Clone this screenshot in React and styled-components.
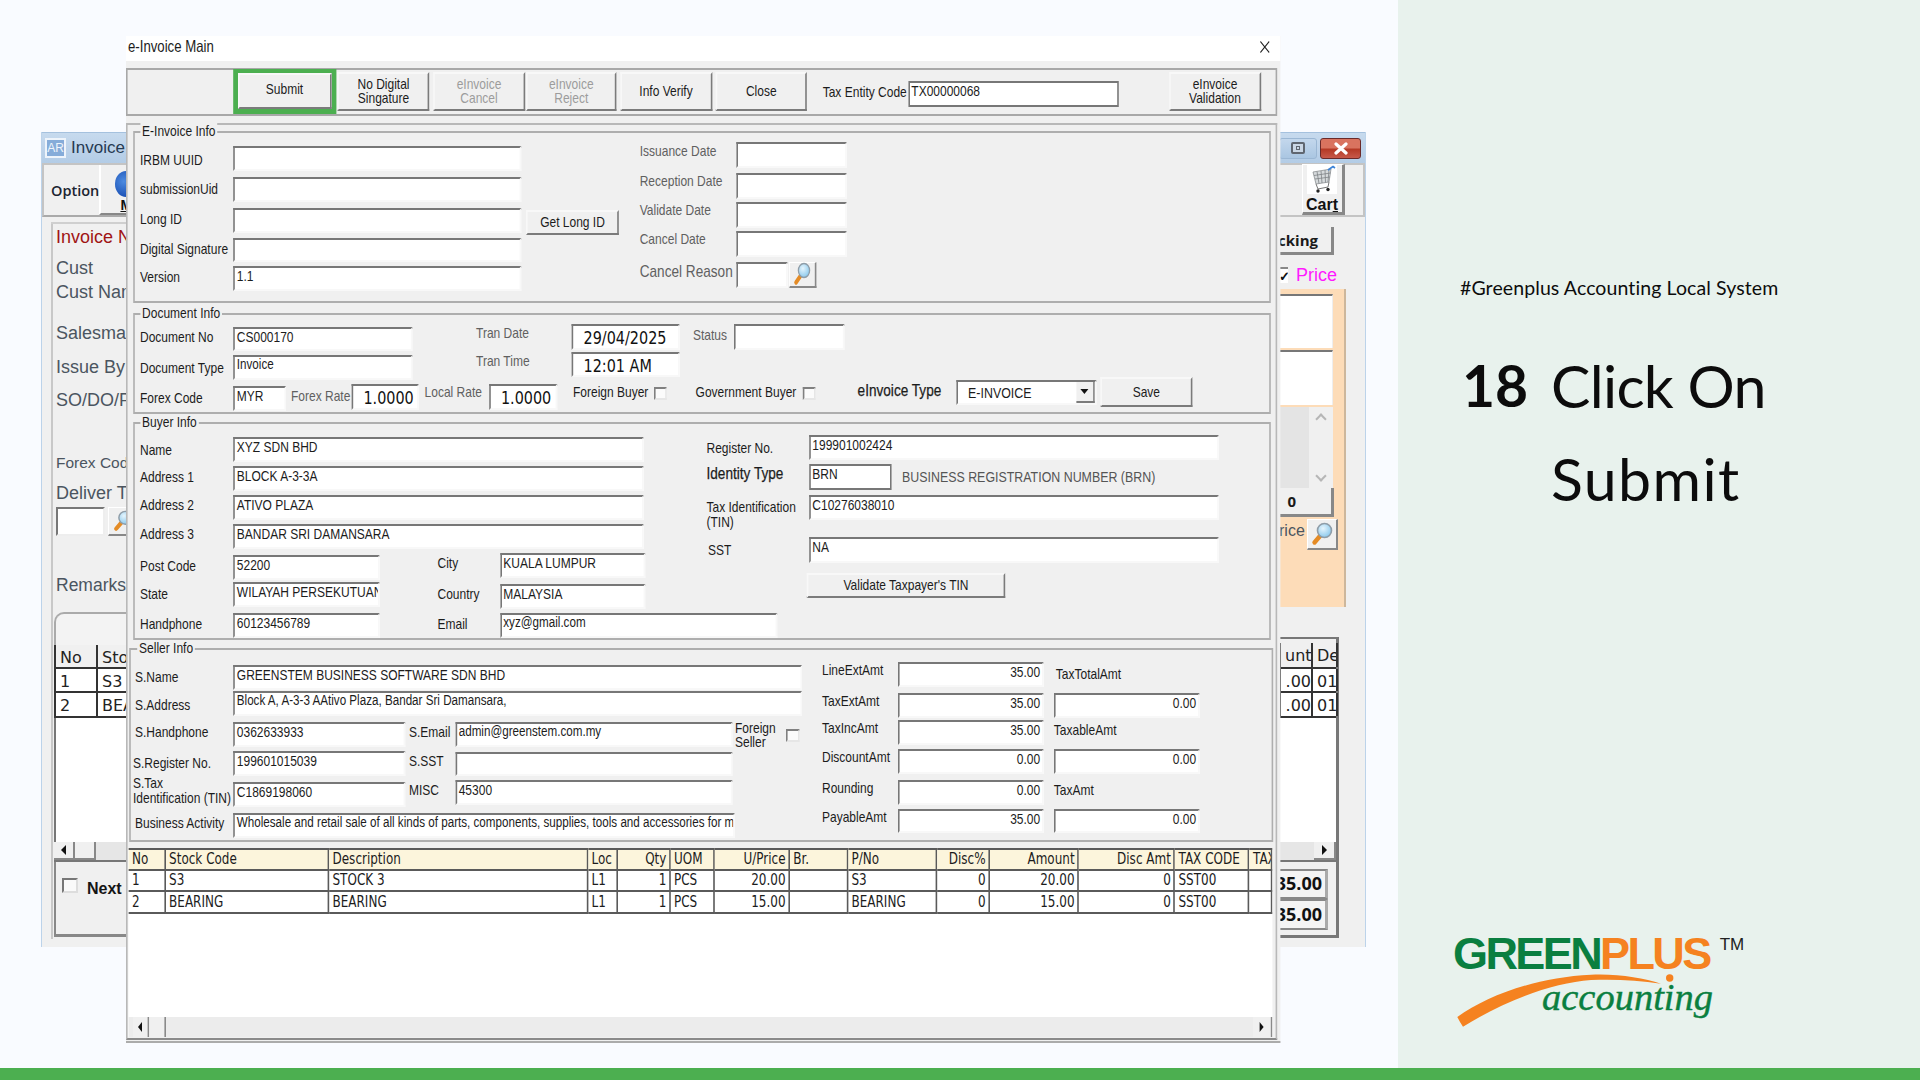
import React, { Children, cloneElement } from "react";
import styled, { createGlobalStyle } from "styled-components";

const K = 0.8;
const u = (x) => (x || 0) / K;

const Global = createGlobalStyle`
  html, body { margin: 0; padding: 0; height: 100%; overflow: hidden; background: #f9fbff; }
  * { box-sizing: border-box; }
`;

const Rows = ({ top, children }) => {
  let prev = top;
  return Children.map(children, (c) => {
    if (!c) return c;
    const mt = c.props.$y - prev;
    prev = c.props.$y + c.props.$h;
    return cloneElement(c, { $mt: mt });
  });
};

const Page = styled.div`
  width: 1920px; height: 1080px; display: flex; flex-direction: column;
  font-family: "Liberation Sans", Arial, sans-serif; overflow: hidden;
`;
const Stage = styled.div`display: flex; height: 1068px;`;
const Desktop = styled.div`position: relative; width: 1398px; height: 100%; background: #f9fbff; overflow: hidden;`;
const FooterBar = styled.div`height: 12px; background: #4caf50;`;

/* ---------- right information panel ---------- */
const Aside = styled.aside`
  flex: 1; background: #e8f2ed; padding: 274px 0 0 62px; display: flex; flex-direction: column; color: #0c0c0c;
  font-family: Lato, "Open Sans", sans-serif;
`;
const Tagline = styled.div`font-size: 19.5px; line-height: 28px; letter-spacing: 0.1px; white-space: nowrap;`;
const Heading = styled.div`display: flex; margin-top: 37px; line-height: 93px;`;
const StepNum = styled.div`width: 91px; font-size: 57px; font-weight: 700; padding-left: 2px;`;
const StepText = styled.div`font-size: 59px; letter-spacing: -0.7px; white-space: nowrap;`;
const WideWord = styled.span`letter-spacing: 1.4px;`;
const Logo = styled.div`position: relative; margin: 412px 0 0 -7px; width: 300px; height: 92px; font-family: "Liberation Sans", Arial, sans-serif;`;
const LogoLine = styled.div`display: flex; font-size: 45px; font-weight: 700; letter-spacing: -2.6px; line-height: 34px; height: 34px;`;
const LogoGreen = styled.span`color: #0a7f40;`;
const LogoOrange = styled.span`color: #f58220;`;
const LogoTm = styled.span`color: #222; font-size: 17px; font-weight: 400; letter-spacing: 0; line-height: 16px; margin-left: 10px;`;
const LogoSwoosh = styled.svg`position: absolute; left: 0; top: 0; width: 240px; height: 92px;`;
const LogoWord = styled.span`
  position: absolute; left: 89px; top: 38px; color: #0a7f40; font: italic 400 38.5px/44px "Liberation Serif", serif;
  -webkit-text-stroke: 0.4px #0a7f40;
`;

/* ---------- rear window ---------- */
const BackWindow = styled.div`
  position: absolute; left: 41px; top: 132px; width: 1325px; height: 815px; background: #f0f0f0;
  border: solid #bcd3ea; border-width: 0 1px; display: flex; justify-content: space-between;
`;
const Strip = styled.div`display: flex; flex-direction: column; width: ${(p) => p.$w}px; overflow: hidden; flex: none;`;
const SideRow = styled.div`
  display: flex; flex: none; height: ${(p) => p.$h}px; margin-top: ${(p) => p.$mt || 0}px; margin-left: ${(p) => p.$ml || 0}px;
  ${(p) => (p.$w ? `width: ${p.$w}px;` : "")}
  align-items: center; white-space: nowrap;
`;
const SideTitle = styled(SideRow)`background: linear-gradient(#c7daee, #b3cce6); border-top: 1px solid #a5c1de; color: #263a52; font-size: 17px;`;
const SideTitleEnd = styled(SideTitle)`justify-content: flex-end; padding-right: 4px; gap: 3px;`;
const ArIcon = styled.span`
  width: 21px; height: 20px; margin: 0 5px 0 3px; border: 2px solid #eef4fb; background: #86acd9; color: #eef4fb;
  font-size: 12px; line-height: 16px; text-align: center; flex: none;
`;
const SideBarL = styled(SideRow)`border: 2px solid #c4c4c4; border-right: 0; border-bottom-color: #aaa; background: #f0f0f0; position: relative; padding-left: 7px;`;
const SideBarR = styled(SideRow)`border: 2px solid #c4c4c4; border-left: 0; background: #f0f0f0; padding-left: 22.5px; padding-right: 2px;`;
const OptionText = styled.span`font-size: 14.5px; color: #1b2431; font-family: "Open Sans", sans-serif; font-weight: 600; width: 54px;`;
const ToolCell = styled.div`height: 100%; flex: 1; border-left: 2px solid #fff; border-bottom: 2px solid #888; display: flex; flex-direction: column; align-items: center; padding-left: 14px;`;
const Globe = styled.span`width: 22px; height: 26px; border-radius: 50%; margin: 6px 0 0; flex: none; background: radial-gradient(circle at 40% 40%, #4d8be0, #0b3fa8);`;
const MiniBold = styled.span`font-size: 14px; font-weight: 700; text-decoration: underline; color: #111; line-height: 16px;`;
const ReadText = styled.span`
  font-size: ${(p) => p.$s || 18}px; color: ${(p) => p.$c || "#4b5560"}; font-weight: ${(p) => p.$b || 400};
  padding-left: ${(p) => p.$pl || 0}px; padding-bottom: ${(p) => p.$pb || 0}px; line-height: 22px;
`;
const FrameTop = styled.div`height: 2px; margin: 5px 0 0 9px; background: #cfcfcf;`;
const FrameBody = styled.div`display: flex; flex-direction: column; margin-left: 9px; border-left: 2px solid #c8c8c8; height: 715px;`;
const RoundTab = styled(SideRow)`border: solid #aaa; border-width: 2px 0 0 2px; border-top-left-radius: 10px; background: #f3f3f3;`;
const WhiteBlock = styled(SideRow)`background: #fff; border-left: 2px solid #777;`;
const NextBox = styled(SideRow)`border: solid #888; border-width: 0 0 3px 2px; align-items: flex-start; padding: 16px 0 0 6px;`;
const BackCellRow = styled(SideRow)`border-bottom: 2px solid #333; border-left: 2px solid #333; background: #fff; align-items: stretch;`;
const BackCell = styled.div`
  width: ${(p) => p.$w}px; flex: none; border-right: 2px solid #333; padding-left: 4px; font-size: 16px; line-height: 25px;
  color: #222; text-align: ${(p) => p.$right ? "right" : "left"}; overflow: hidden; font-family: "DejaVu Sans", sans-serif;
  background: ${(p) => (p.$head ? "#f0f0f0" : "#fff")};
`;
const ScrollLine = styled(SideRow)`background: #e6e6e6; border-bottom: 2px solid #777;`;
const ScrollBtn = styled.div`
  width: ${(p) => p.$w}px; height: 100%; background: #f0f0f0; border: solid #888; border-width: 0 2px 2px 0; flex: none;
  display: flex; align-items: center; justify-content: center; margin-left: ${(p) => p.$ml || 0}px;
`;
const Arrow = styled.span`
  width: 0; height: 0; border: solid transparent; border-width: 5px 0 5px 0; 
  ${(p) => (p.$dir === "left" ? "border-right: 5px solid #111;" : "border-left: 5px solid #111;")}
`;
const SideInput = styled.div`
  width: ${(p) => p.$w}px; height: 100%; background: #fff; border: solid; border-color: #777 #eee #eee #777; border-width: 2px; flex: none;
`;
const SideCheck = styled.span`width: 16px; height: 15px; background: #fafafa; border: solid; border-color: #777 #ddd #ddd #777; border-width: 2px; flex: none;`;
const CheckStub = styled.span`width: 9px; height: 16px; background: #fff; flex: none; font-size: 13px; font-weight: 700; line-height: 16px; color: #111; overflow: hidden; border-top: 2px solid #888;`;
const WinBtn = styled.div`
  width: ${(p) => p.$w}px; height: 21px; border-radius: 3px; flex: none;
  display: flex; align-items: center; justify-content: center;
  background: ${(p) => (p.$red ? "linear-gradient(#d9735f 0 45%, #b53a26 55%, #c7594a)" : "linear-gradient(#c3d7ec, #aac6e2)")};
  border: 1px solid ${(p) => (p.$red ? "#6a2a2a" : "#9bb7d4")};
`;
const RestoreGlyph = styled.span`width: 14px; height: 12px; border: 2px solid #5f6670; border-radius: 2px; background: #c9d6e4; display: flex; align-items: center; justify-content: center;`;
const RestoreCore = styled.span`width: 4px; height: 4px; border: 1px solid #5f6670;`;
const CartBtn = styled.div`
  width: 43px; height: 51px; flex: none; margin-top: -1px; background: #f0f0f0; border: solid; border-color: #fff #888 #888 #fff; border-width: 1px 3px 3px 1px;
  display: flex; flex-direction: column; align-items: center; font-size: 16px; font-weight: 700; color: #111; line-height: 15px;
`;
const CartMark = styled.svg`width: 30px; height: 29px; background: #fff; flex: none; margin-bottom: 3px;`;
const Underlined = styled.span`text-decoration: underline;`;
const RaisedBox = styled(SideRow)`
  background: #f0f0f0; border: solid #888; border-width: 0 3px 3px 0; justify-content: flex-end; padding-right: ${(p) => p.$pr || 13}px;
  font-size: 15px; font-weight: 700; color: #1a1a1a; font-family: "Open Sans", sans-serif;
`;
const PeachPanel = styled(SideRow)`background: #fddcb8; flex-direction: column; align-items: flex-start; border-right: 2px solid #cdb79c;`;
const WhiteBox = styled(SideRow)`background: #fff; border-top: 2px solid #777; border-right: 1px solid #eee;`;
const GreyList = styled(SideRow)`background: #e4e4e4;`;
const GreyRail = styled.div`margin-left: 30px; width: 24px; height: 100%; background: #f0f0f0; display: flex; flex-direction: column; justify-content: space-between; align-items: center; padding: 8px 0; color: #b0b0b0;`;
const UpDown = styled.span`width: 8px; height: 8px; border: solid #b6b6b6; border-width: 2px 0 0 2px; transform: rotate(${(p) => p.$r}deg);`;
const SearchBtn = styled.div`
  width: ${(p) => p.$w}px; height: 100%; background: #f0f0f0; border: solid; border-color: #fff #888 #888 #fff; border-width: 1px 2px 2px 1px; flex: none;
  display: flex; align-items: center; justify-content: center; margin-left: ${(p) => p.$ml || 0}px;
`;
const SearchMark = styled.svg`width: ${(p) => p.$s}px; height: ${(p) => p.$s}px; flex: none;`;
const TotalBox = styled(SideRow)`
  border: solid; border-color: #888 #aaa #888 #fff; border-width: 2px 3px 2px 0; background: #f4f4f4; justify-content: flex-end; padding: 0 3px 2px 0;
  font: 700 18px/22px "Open Sans", sans-serif; color: #111;
`;
const RightEdge = styled.div`display: flex; flex-direction: column; width: 60px; border: solid #777; border-width: 2px 3px 3px 0; height: ${(p) => p.$h}px; margin-top: ${(p) => p.$mt || 0}px; flex: none;`;
const WhiteFill = styled(SideRow)`background: #fff;`;

/* ---------- e-invoice window ---------- */
const Win = styled.div`
  position: absolute; left: 126px; top: 36px; width: ${u(1154)}px; height: 1007px; background: #f0f0f0; transform: scaleX(${K}); transform-origin: 0 0;
  display: flex; flex-direction: column; font-size: 15px; color: #1c1c1c; border-bottom: 2px solid #ababab;
`;
const WinTitle = styled.div`height: 25px; background: #fff; display: flex; align-items: center; justify-content: space-between; padding: 0 ${u(9)}px 4px ${u(2)}px; font-size: 16.5px; flex: none;`;
const CloseMark = styled.svg`width: ${u(12)}px; height: 12px;`;
const Toolbar = styled.div`
  width: ${u(1151.5)}px; height: 48px; margin-top: 7px; border: 2px solid #a8a8a8; display: flex; align-items: flex-start; flex: none;
`;
const Ring = styled.div`
  width: ${u(103)}px; height: 45px; margin: -1px 0 0 ${u(105.4)}px; border: solid #4caf50; border-width: 4px ${u(5)}px 5px; flex: none; display: flex;
`;
const Btn = styled.div`
  width: ${(p) => (p.$fill ? "100%" : `${u(p.$w)}px`)}; height: ${(p) => (p.$fill ? "100%" : `${p.$h}px`)}; flex: none;
  margin: ${(p) => p.$mt || 0}px 0 0 ${(p) => u(p.$ml)}px;
  background: #f0f0f0; border: solid; border-color: #f8f8f8 #7b7b7b #7b7b7b #f8f8f8; border-width: 2px;
  display: flex; align-items: center; justify-content: center; text-align: center; line-height: 14.7px; white-space: nowrap;
  color: ${(p) => (p.$off ? "#9c9c9c" : "#1c1c1c")}; padding-bottom: ${(p) => p.$pb || 0}px;
`;
const Panel = styled.div`
  width: ${u(1151.5)}px; height: 917px; margin-top: 7px; border: 2px solid #b8b8b8; border-bottom-color: #8a8a8a; display: flex; flex-direction: column; align-items: flex-start; flex: none;
`;
const Group = styled.div`
  position: relative; width: ${(p) => u(p.$w)}px; height: ${(p) => p.$h}px; margin: ${(p) => p.$mt}px 0 0 ${(p) => u(p.$ml)}px;
  border: 2px solid #aeaeae; display: ${(p) => (p.$stack ? "block" : "flex")}; flex: none;
`;
const Legend = styled.span`
  position: absolute; left: ${(p) => u(p.$x)}px; top: -10px; padding: 0 ${u(2)}px; background: #f0f0f0; line-height: 16px; white-space: nowrap;
`;
const Col = styled.div`display: flex; flex-direction: column; flex: none; width: ${(p) => u(p.$w)}px; margin-left: ${(p) => u(p.$ml)}px;`;
const Band = styled.div`display: flex; flex: none; align-items: flex-start; height: ${(p) => p.$h}px; margin-top: ${(p) => p.$mt || 0}px;`;
const Row = styled.div`
  display: flex; align-items: center; flex: none; height: ${(p) => p.$h}px;
  margin-top: ${(p) => p.$mt || 0}px; margin-left: ${(p) => u(p.$ml)}px;
`;
const L = styled.span`
  flex: none; display: block; width: ${(p) => u(p.$w)}px; margin-left: ${(p) => u(p.$ml)}px;
  padding-left: ${(p) => u(p.$pl)}px; padding-bottom: 2px;
  margin-top: ${(p) => (p.$dy > 0 ? p.$dy * 2 : 0)}px; margin-bottom: ${(p) => (p.$dy < 0 ? -p.$dy * 2 : 0)}px;
  font-size: ${(p) => (p.$strong ? 17 : 15)}px; line-height: 14.6px; white-space: nowrap;
  color: ${(p) => (p.$gray ? "#606060" : "#1c1c1c")};
  ${(p) => (p.$strong && !p.$gray ? "-webkit-text-stroke: 0.25px #1c1c1c;" : "")}
`;
const F = styled.div`
  flex: none; width: ${(p) => u(p.$w)}px; height: 100%; background: #fff; margin-left: ${(p) => u(p.$ml)}px; overflow: hidden;
  border: 2px solid; border-color: ${(p) => (p.$boxed ? "#777" : "#777 #f8f8f8 #f8f8f8 #777")};
  padding: 0 ${u(2)}px 0 ${u(1.7)}px; line-height: 15px; font-size: ${(p) => (p.$tight ? 14.55 : 15)}px; white-space: nowrap; color: #1c1c1c;
  text-align: ${(p) => (p.$right ? "right" : "left")};
`;
const Big = styled(F)`
  font: 400 18px/23px "DejaVu Sans", sans-serif; padding-left: ${u(10.5)}px;
  color: #111;
`;
const Note = styled.span`flex: none; margin-left: ${u(10.4)}px; font-size: 15.5px; color: #555;`;
const Check = styled.span`
  flex: none; width: ${(p) => u(p.$w || 13)}px; height: 13px; background: #fbfbfb; border: 2px solid; border-color: #808080 #e6e6e6 #e6e6e6 #808080;
  margin-top: ${(p) => (p.$dy > 0 ? p.$dy * 2 : 0)}px; margin-bottom: ${(p) => (p.$dy < 0 ? -p.$dy * 2 : 0)}px;
`;
const Select = styled(F)`display: flex; padding: 0 0 0 ${u(10.5)}px; font-size: 15.5px; line-height: 21px; justify-content: space-between;`;
const SelectBtn = styled.span`
  width: ${u(18)}px; height: 100%; flex: none; background: #f0f0f0; border: solid #7b7b7b; border-width: 0 2px 2px 0; display: flex; align-items: center; justify-content: center;
`;
const DownTri = styled.span`width: 0; height: 0; border: solid transparent; border-width: 5px 5px 0; border-top-color: #111;`;
const GridWrap = styled.div`
  width: ${u(1143.4)}px; height: 189px; margin: 6px 0 0 ${u(1)}px; background: #fff; display: flex; flex-direction: column; flex: none; overflow: hidden;
`;
const GridTable = styled.table`
  border-collapse: separate; border-spacing: 0; table-layout: fixed; width: 100%; font: 400 15px/19px "DejaVu Sans", sans-serif; color: #1c1c1c; flex: none;
`;
const Hd = styled.th`
  height: 21.4px; background: #fcf5dc; font-weight: 400; padding: 0 ${u(2.5)}px 0 ${u(3.5)}px; border: solid #5a5a5a; border-width: 2px 2px 2px 0; white-space: nowrap; overflow: hidden;
  text-align: ${(p) => (p.$right ? "right" : "left")};
`;
const Td = styled.td`
  height: 21.2px; padding: 0 ${u(2.5)}px 0 ${u(3.5)}px; border: solid #5a5a5a; border-width: 0 2px 2px 0; white-space: nowrap; overflow: hidden;
  text-align: ${(p) => (p.$right ? "right" : "left")};
`;
const GridSpacer = styled.div`flex: 1;`;
const HScroll = styled.div`height: 20px; flex: none; background: #ececec; display: flex; padding-left: ${u(4.5)}px;`;
const HBtn = styled.div`
  flex: none; width: ${(p) => u(p.$w)}px; height: 100%; margin-left: ${(p) => (p.$end ? "auto" : "0")}; background: #f0f0f0; border: solid #8a8a8a; border-width: 0 2px 0 0;
  display: flex; align-items: center; justify-content: center;
`;

const Search = ({ size }) => (
  <SearchMark $s={size} viewBox="0 0 24 24">
    <defs>
      <radialGradient id="lens" cx="0.4" cy="0.35" r="0.75">
        <stop offset="0" stopColor="#e6f5fd" />
        <stop offset="1" stopColor="#7fc3ea" />
      </radialGradient>
    </defs>
    <path d="M10 14 L4.5 20.5" stroke="#e48b25" strokeWidth="4.4" strokeLinecap="round" />
    <circle cx="14.5" cy="8.5" r="7" fill="url(#lens)" stroke="#8f9da8" strokeWidth="1.6" />
  </SearchMark>
);

const Cart = () => (
  <CartMark viewBox="0 0 30 29">
    <path d="M6 7 L24 4 L22 17 L9 19 Z" fill="#d6dadc" stroke="#8b8f92" strokeWidth="0.8" />
    <path d="M10 6.5 L12 18.5 M14 6 L15 18 M18 5 L18.5 17.5 M22 4.5 L21 17 M7 10.5 L23.5 8 M8 14 L23 12" stroke="#7f8386" strokeWidth="0.8" fill="none" />
    <path d="M21 5 L26 1.5 L28 3" stroke="#3b82d6" strokeWidth="1.6" fill="none" />
    <path d="M9 19 L11 24 L21 22 L22 17" stroke="#777" strokeWidth="1" fill="none" />
    <circle cx="11" cy="26" r="1.7" fill="#222" /><circle cx="21" cy="24.5" r="1.7" fill="#222" />
  </CartMark>
);

const COLS = [37, 163.4, 259, 30.3, 52.2, 44.1, 75.1, 58.3, 89, 52.7, 89, 96.3, 74.5, 22.5];
const HEAD = [["No"], ["Stock Code"], ["Description"], ["Loc"], ["Qty", 1], ["UOM"], ["U/Price", 1], ["Br."], ["P/No"], ["Disc%", 1], ["Amount", 1], ["Disc Amt", 1], ["TAX CODE"], ["TAX Amt"]];
const DATA = [
  ["1", "S3", "STOCK 3", "L1", "1", "PCS", "20.00", "", "S3", "0", "20.00", "0", "SST00", ""],
  ["2", "BEARING", "BEARING", "L1", "1", "PCS", "15.00", "", "BEARING", "0", "15.00", "0", "SST00", ""],
];

const LeftSide = () => (
  <Strip $w={84}>
    <Rows top={132}>
      <SideTitle $y={132} $h={31}><ArIcon>AR</ArIcon>Invoice /</SideTitle>
      <SideBarL $y={163} $h={54}><OptionText>Option</OptionText><ToolCell><Globe /><MiniBold>M</MiniBold></ToolCell></SideBarL>
    </Rows>
    <FrameTop />
    <FrameBody>
      <Rows top={224}>
        <SideRow $y={226} $h={22}><ReadText $c="#a01414" $pl={3}>Invoice N</ReadText></SideRow>
        <SideRow $y={257} $h={22}><ReadText $pl={3}>Cust</ReadText></SideRow>
        <SideRow $y={281} $h={22}><ReadText $pl={3}>Cust Name</ReadText></SideRow>
        <SideRow $y={322} $h={22}><ReadText $pl={3}>Salesman</ReadText></SideRow>
        <SideRow $y={356} $h={22}><ReadText $pl={3}>Issue By</ReadText></SideRow>
        <SideRow $y={389} $h={22}><ReadText $pl={3}>SO/DO/PO</ReadText></SideRow>
        <SideRow $y={452} $h={22}><ReadText $s={15.5} $pl={3}>Forex Code</ReadText></SideRow>
        <SideRow $y={482} $h={22}><ReadText $pl={3}>Deliver To</ReadText></SideRow>
        <SideRow $y={507} $h={29} $ml={3}><SideInput $w={49} /><SearchBtn $w={30} $ml={3}><Search size={22} /></SearchBtn></SideRow>
        <SideRow $y={574} $h={22}><ReadText $s={17.5} $pl={3}>Remarks</ReadText></SideRow>
        <RoundTab $y={612} $h={33} $ml={1} />
        <BackCellRow $y={645} $h={24} $ml={1}><BackCell $w={42} $head>No</BackCell><BackCell $w={30} $head>Stock</BackCell></BackCellRow>
        <BackCellRow $y={669} $h={24} $ml={1}><BackCell $w={42}>1</BackCell><BackCell $w={30}>S3</BackCell></BackCellRow>
        <BackCellRow $y={693} $h={25} $ml={1}><BackCell $w={42}>2</BackCell><BackCell $w={30}>BEARING</BackCell></BackCellRow>
        <WhiteBlock $y={718} $h={124} $ml={1} />
        <ScrollLine $y={842} $h={20} $ml={1}><ScrollBtn $w={21}><Arrow $dir="left" /></ScrollBtn><ScrollBtn $w={21} /></ScrollLine>
        <NextBox $y={862} $h={75} $ml={1}><SideCheck /><ReadText $s={16} $c="#151515" $b={700} $pl={9}>Next</ReadText></NextBox>
      </Rows>
    </FrameBody>
  </Strip>
);

const RightSide = () => (
  <Strip $w={86}>
    <Rows top={132}>
      <SideTitleEnd $y={132} $h={31}>
        <WinBtn $w={38}><RestoreGlyph><RestoreCore /></RestoreGlyph></WinBtn>
        <WinBtn $w={41} $red>
          <svg width="16" height="13" viewBox="0 0 16 13"><path d="M3 2 L13 11 M13 2 L3 11" stroke="#fff" strokeWidth="3.2" strokeLinecap="round" /></svg>
        </WinBtn>
      </SideTitleEnd>
      <SideBarR $y={163} $h={54}>
        <CartBtn><Cart /><span>Car<Underlined>t</Underlined></span></CartBtn>
      </SideBarR>
      <RaisedBox $y={227} $h={28} $w={55}>cking</RaisedBox>
      <SideRow $y={264} $h={22} $w={67}>
        <CheckStub>✓</CheckStub>
        <ReadText $s={18} $c="#ff19ff" $pl={8}>Price</ReadText>
      </SideRow>
      <PeachPanel $y={289} $h={318} $w={67}>
        <Rows top={289}>
          <WhiteBox $y={294} $h={54} $w={54} />
          <WhiteBox $y={350} $h={55} $w={54} />
          <GreyList $y={407} $h={81} $w={54}><GreyRail><UpDown $r={45} /><UpDown $r={225} /></GreyRail></GreyList>
          <RaisedBox $y={488} $h={29} $w={55} $pr={35}><span>0</span></RaisedBox>
          <SideRow $y={519} $h={31} $w={58}>
            <ReadText $s={16} $c="#4b5560" $pb={7}>rice</ReadText>
            <SearchBtn $w={31} $ml={2}><Search size={24} /></SearchBtn>
          </SideRow>
        </Rows>
      </PeachPanel>
      <RightEdge $y={637} $h={301}>
        <Rows top={639}>
          <BackCellRow $y={643} $h={26}><BackCell $w={32} $head $right>unt</BackCell><BackCell $w={25} $head>De</BackCell></BackCellRow>
          <BackCellRow $y={669} $h={24}><BackCell $w={32} $right>.00</BackCell><BackCell $w={25}>01</BackCell></BackCellRow>
          <BackCellRow $y={693} $h={25}><BackCell $w={32} $right>.00</BackCell><BackCell $w={25}>01</BackCell></BackCellRow>
          <WhiteFill $y={718} $h={124} $w={57} />
          <ScrollLine $y={842} $h={20} $w={57}><ScrollBtn $w={22} $ml={35}><Arrow $dir="right" /></ScrollBtn></ScrollLine>
          <TotalBox $y={869} $h={30} $w={49}>35.00</TotalBox>
          <TotalBox $y={899} $h={31} $w={49}>35.00</TotalBox>
        </Rows>
      </RightEdge>
    </Rows>
  </Strip>
);

export default function App() {
  return (
    <Page>
      <Global />
      <Stage>
        <Desktop>
          <BackWindow>
            <LeftSide />
            <RightSide />
          </BackWindow>
          <Win>
            <WinTitle>
              e-Invoice Main
              <CloseMark viewBox="0 0 12 12"><path d="M0.5 0.5 L11.5 11.5 M11.5 0.5 L0.5 11.5" stroke="#222" strokeWidth="1.1" /></CloseMark>
            </WinTitle>
            <Toolbar>
              <Ring><Btn $fill $pb={3}>Submit</Btn></Ring>
              <Btn $w={92} $h={38.7} $mt={2} $ml={1.5}>No Digital<br />Singature</Btn>
              <Btn $w={92} $h={38.7} $mt={2} $ml={3.5} $off>eInvoice<br />Cancel</Btn>
              <Btn $w={90.5} $h={38.7} $mt={2} $ml={1} $off>eInvoice<br />Reject</Btn>
              <Btn $w={92} $h={38.7} $mt={2} $ml={3.5}>Info Verify</Btn>
              <Btn $w={91.5} $h={38.7} $mt={2} $ml={3.5}>Close</Btn>
              <Row $h={26} $mt={11} $ml={15.7}>
                <L $w={85.3} $dy={-0.5}>Tax Entity Code</L>
                <F $w={211} $boxed>TX00000068</F>
              </Row>
              <Btn $w={92} $h={38.7} $mt={2} $ml={50}>eInvoice<br />Validation</Btn>
            </Toolbar>
            <Panel>
              <Group $w={1137.5} $h={172} $mt={6} $ml={5.4}>
                <Legend $x={5.5}>E-Invoice Info</Legend>
                <Col $w={499.7} $ml={5.4}>
                  <Rows top={132.3}>
                    <Row $y={145.7} $h={25}><L $w={93.5} $dy={2}>IRBM UUID</L><F $w={288} /></Row>
                    <Row $y={176.7} $h={25}><L $w={93.5}>submissionUid</L><F $w={288} /></Row>
                    <Row $y={207.7} $h={25}>
                      <L $w={93.5} $dy={-0.5}>Long ID</L><F $w={288} />
                      <Btn $w={92.4} $h={25.7} $mt={3} $ml={4.8}>Get Long ID</Btn>
                    </Row>
                    <Row $y={237} $h={24.7}><L $w={93.5}>Digital Signature</L><F $w={288} /></Row>
                    <Row $y={265.7} $h={24.6}><L $w={93.5}>Version</L><F $w={288}>1.1</F></Row>
                  </Rows>
                </Col>
                <Col $w={300}>
                  <Rows top={132.3}>
                    <Row $y={141.3} $h={26}><L $w={96.3} $dy={-3} $gray>Issuance Date</L><F $w={110.6} /></Row>
                    <Row $y={172.3} $h={26}><L $w={96.3} $dy={-3.3} $gray>Reception Date</L><F $w={110.6} /></Row>
                    <Row $y={201} $h={26}><L $w={96.3} $dy={-3.3} $gray>Validate Date</L><F $w={110.6} /></Row>
                    <Row $y={230} $h={26.7}><L $w={96.3} $dy={-3.3} $gray>Cancel Date</L><F $w={110.6} /></Row>
                    <Row $y={261.3} $h={26}>
                      <L $w={96.3} $dy={-1.6} $gray $strong>Cancel Reason</L><F $w={51.3} />
                      <SearchBtn $w={u(27)} $ml={u(1.7)}><Search size={24} /></SearchBtn>
                    </Row>
                  </Rows>
                </Col>
              </Group>

              <Group $w={1137.5} $h={101.7} $mt={9.6} $ml={5.4} $stack>
                <Legend $x={5.5}>Document Info</Legend>
                <Band $h={62.8}>
                  <Col $w={336} $ml={5.4}>
                    <Rows top={313.9}>
                      <Row $y={326} $h={24}><L $w={93.5}>Document No</L><F $w={179}>CS000170</F></Row>
                      <Row $y={354.7} $h={24.6}><L $w={93.5} $dy={1.2}>Document Type</L><F $w={179} $tight>Invoice</F></Row>
                    </Rows>
                  </Col>
                  <Col $w={203.5}>
                    <Rows top={313.9}>
                      <Row $y={323.3} $h={26}><L $w={95.4} $dy={-3} $gray>Tran Date</L><Big $w={108}>29/04/2025</Big></Row>
                      <Row $y={351} $h={25.7}><L $w={95.4} $dy={-1.8} $gray>Tran Time</L><Big $w={108}>12:01 AM</Big></Row>
                    </Rows>
                  </Col>
                  <Col $w={200} $ml={13.5}>
                    <Rows top={313.9}>
                      <Row $y={323.3} $h={26}><L $w={40.7} $dy={-1} $gray>Status</L><F $w={111} /></Row>
                    </Rows>
                  </Col>
                </Band>
                <Band $h={34}>
                  <Row $h={25} $mt={9} $ml={5.4}><L $w={93.5}>Forex Code</L><F $w={52.2}>MYR</F></Row>
                  <Row $h={25.6} $mt={7} $ml={5.3}>
                    <L $w={60.3} $gray>Forex Rate</L><Big $w={67.7}>1.0000</Big>
                    <L $w={64.2} $ml={5.6} $dy={-3.7} $gray>Local Rate</L><Big $w={68.2}>1.0000</Big>
                    <L $w={80.6} $ml={16} $dy={-3.5}>Foreign Buyer</L><Check $dy={-3.5} />
                    <L $w={107.5} $ml={29} $dy={-3.5}>Government Buyer</L><Check $w={12.5} $dy={-3.5} />
                  </Row>
                  <Row $h={25.3} $mt={2.3} $ml={42}>
                    <L $w={98.4} $strong>eInvoice Type</L>
                    <Select $w={140}>E-INVOICE<SelectBtn><DownTri /></SelectBtn></Select>
                  </Row>
                  <Btn $w={91.3} $h={29.3} $ml={4.7}>Save</Btn>
                </Band>
              </Group>

              <Group $w={1137.5} $h={217.6} $mt={7.7} $ml={5.4}>
                <Legend $x={5.5}>Buyer Info</Legend>
                <Col $w={566.5} $ml={5.4}>
                  <Rows top={423.3}>
                    <Row $y={436.7} $h={25}><L $w={93.5} $dy={1.5}>Name</L><F $w={410.3}>XYZ SDN BHD</F></Row>
                    <Row $y={465.7} $h={25}><L $w={93.5} $dy={-1}>Address 1</L><F $w={410.3}>BLOCK A-3-3A</F></Row>
                    <Row $y={494.7} $h={24.6}><L $w={93.5} $dy={-1}>Address 2</L><F $w={410.3}>ATIVO PLAZA</F></Row>
                    <Row $y={523.7} $h={24.3}><L $w={93.5} $dy={-1}>Address 3</L><F $w={410.3}>BANDAR SRI DAMANSARA</F></Row>
                  </Rows>
                  <Band $h={84.6} $mt={4.7}>
                    <Col $w={297.5}>
                      <Rows top={552.7}>
                        <Row $y={554.3} $h={24.7}><L $w={93.5}>Post Code</L><F $w={146}>52200</F></Row>
                        <Row $y={581.7} $h={24.6}><L $w={93.5} $dy={1}>State</L><F $w={146}>WILAYAH PERSEKUTUAN</F></Row>
                        <Row $y={612} $h={25}><L $w={93.5}>Handphone</L><F $w={146}>60123456789</F></Row>
                      </Rows>
                    </Col>
                    <Col $w={269}>
                      <Rows top={552.7}>
                        <Row $y={552.7} $h={24.3}><L $w={62.5} $dy={-1}>City</L><F $w={145.5}>KUALA LUMPUR</F></Row>
                        <Row $y={583.3} $h={25.4}><L $w={62.5} $dy={-1}>Country</L><F $w={145.5}>MALAYSIA</F></Row>
                        <Row $y={612.3} $h={24.7}><L $w={62.5}>Email</L><F $w={277} $tight>xyz@gmail.com</F></Row>
                      </Rows>
                    </Col>
                  </Band>
                </Col>
                <Col $w={520}>
                  <Rows top={423.3}>
                    <Row $y={434.7} $h={25}><L $w={102.5} $dy={1.5}>Register No.</L><F $w={410}>199901002424</F></Row>
                    <Row $y={463.3} $h={26}><L $w={102.5} $dy={-1.3} $strong>Identity Type</L><F $w={82.6} $boxed>BRN</F><Note>BUSINESS REGISTRATION NUMBER (BRN)</Note></Row>
                    <Row $y={494.7} $h={24.6}><L $w={102.5} $dy={8.3}>Tax Identification<br />(TIN)</L><F $w={410}>C10276038010</F></Row>
                    <Row $y={536.7} $h={25.3}><L $w={102.5} $pl={1.5} $dy={1.3}>SST</L><F $w={410}>NA</F></Row>
                    <Row $y={572.3} $h={25}><Btn $w={198} $h={25} $ml={100.5}>Validate Taxpayer's TIN</Btn></Row>
                  </Rows>
                </Col>
              </Group>

              <Group $w={1143.5} $h={194} $mt={8.7} $ml={1.9}>
                <Legend $x={6}>Seller Info</Legend>
                <Col $w={689} $ml={1.9}>
                  <Rows top={649.6}>
                    <Row $y={664} $h={25}><L $w={100.5} $pl={2} $dy={0.8}>S.Name</L><F $w={568.2}>GREENSTEM BUSINESS SOFTWARE SDN BHD</F></Row>
                    <Row $y={690.7} $h={24.3}><L $w={100.5} $pl={2} $dy={3}>S.Address</L><F $w={568.2} $tight>Block A, A-3-3 AAtivo Plaza, Bandar Sri Damansara,</F></Row>
                  </Rows>
                  <Band $h={85} $mt={6}>
                    <Col $w={272.4}>
                      <Rows top={721}>
                        <Row $y={721} $h={25}><L $w={100.5} $pl={2} $dy={-1}>S.Handphone</L><F $w={171.9}>0362633933</F></Row>
                        <Row $y={750.3} $h={24.7}><L $w={100.5} $dy={1.3}>S.Register No.</L><F $w={171.9}>199601015039</F></Row>
                        <Row $y={781} $h={25}><L $w={100.5} $dy={-2.5}>S.Tax<br />Identification (TIN)</L><F $w={171.9}>C1869198060</F></Row>
                      </Rows>
                    </Col>
                    <Col $w={416}>
                      <Rows top={721}>
                        <Row $y={721} $h={25}>
                          <L $w={46.4} $ml={3.6} $dy={-0.8}>S.Email</L><F $w={276.9} $tight>admin@greenstem.com.my</F>
                          <L $w={51.3} $ml={2.7} $dy={2.2}>Foreign<br />Seller</L><Check $dy={1.7} />
                        </Row>
                        <Row $y={751} $h={24}><L $w={46.4} $ml={3.6} $dy={-1.3}>S.SST</L><F $w={276.9} /></Row>
                        <Row $y={779.3} $h={24.7}><L $w={46.4} $ml={3.6} $dy={-1}>MISC</L><F $w={276.9}>45300</F></Row>
                      </Rows>
                    </Col>
                  </Band>
                  <Row $h={24.7} $mt={6.3}><L $w={100.5} $pl={2} $dy={-0.6}>Business Activity</L><F $w={501.5} $tight>Wholesale and retail sale of all kinds of parts, components, supplies, tools and accessories for motor vehicles</F></Row>
                </Col>
                <Col $w={231.8}>
                  <Rows top={649.6}>
                    <Row $y={661.3} $h={24.7}><L $w={75.6} $dy={-3}>LineExtAmt</L><F $w={146.2} $right>35.00</F></Row>
                    <Row $y={692.3} $h={24.7}><L $w={75.6} $dy={-3}>TaxExtAmt</L><F $w={146.2} $right>35.00</F></Row>
                    <Row $y={719.3} $h={24.7}><L $w={75.6} $dy={-3.3}>TaxIncAmt</L><F $w={146.2} $right>35.00</F></Row>
                    <Row $y={748.3} $h={24.7}><L $w={75.6} $dy={-3.3}>DiscountAmt</L><F $w={146.2} $right>0.00</F></Row>
                    <Row $y={779.3} $h={24.7}><L $w={75.6} $dy={-3}>Rounding</L><F $w={146.2} $right>0.00</F></Row>
                    <Row $y={808} $h={24.3}><L $w={75.6} $dy={-2.9}>PayableAmt</L><F $w={146.2} $right>35.00</F></Row>
                  </Rows>
                </Col>
                <Col $w={150}>
                  <Rows top={649.6}>
                    <Row $y={664} $h={22}><L $w={100} $pl={2}>TaxTotalAmt</L></Row>
                    <Row $y={692.3} $h={24.7}><F $w={146} $right>0.00</F></Row>
                    <Row $y={719.7} $h={22}><L $w={100}>TaxableAmt</L></Row>
                    <Row $y={748.3} $h={24.7}><F $w={146} $right>0.00</F></Row>
                    <Row $y={779.7} $h={22}><L $w={100}>TaxAmt</L></Row>
                    <Row $y={808} $h={24.3}><F $w={146} $right>0.00</F></Row>
                  </Rows>
                </Col>
              </Group>

              <GridWrap>
                <GridTable>
                  <colgroup>{COLS.map((w, i) => <col key={i} style={{ width: `${u(w)}px` }} />)}</colgroup>
                  <thead><tr>{HEAD.map(([t, r], i) => <Hd key={i} $right={!!r}>{t}</Hd>)}</tr></thead>
                  <tbody>
                    {DATA.map((row, i) => (
                      <tr key={i}>{row.map((c, j) => <Td key={j} $right={!!HEAD[j][1]}>{c}</Td>)}</tr>
                    ))}
                  </tbody>
                </GridTable>
                <GridSpacer />
                <HScroll>
                  <HBtn $w={15.7}><Arrow $dir="left" /></HBtn>
                  <HBtn $w={17} />
                  <HBtn $w={19} $end><Arrow $dir="right" /></HBtn>
                </HScroll>
              </GridWrap>
            </Panel>
          </Win>
        </Desktop>
        <Aside>
          <Tagline>#Greenplus Accounting Local System</Tagline>
          <Heading>
            <StepNum>18</StepNum>
            <StepText>Click On<br /><WideWord>Submit</WideWord></StepText>
          </Heading>
          <Logo>
            <LogoLine>
              <LogoGreen>GREEN</LogoGreen><LogoOrange>PLUS</LogoOrange><LogoTm>TM</LogoTm>
            </LogoLine>
            <LogoSwoosh viewBox="0 0 240 92">
              <path d="M4.3 80 C35 58 85 40 138 37.7 C165 36.5 190 41 208 46.7 C185 43 160 42 138 43 C100 46 55 62 10 89.7 L7 85 Z" fill="#f58220" />
              <circle cx="216.7" cy="41" r="3.7" fill="#f58220" />
            </LogoSwoosh>
            <LogoWord>accounting</LogoWord>
          </Logo>
        </Aside>
      </Stage>
      <FooterBar />
    </Page>
  );
}
